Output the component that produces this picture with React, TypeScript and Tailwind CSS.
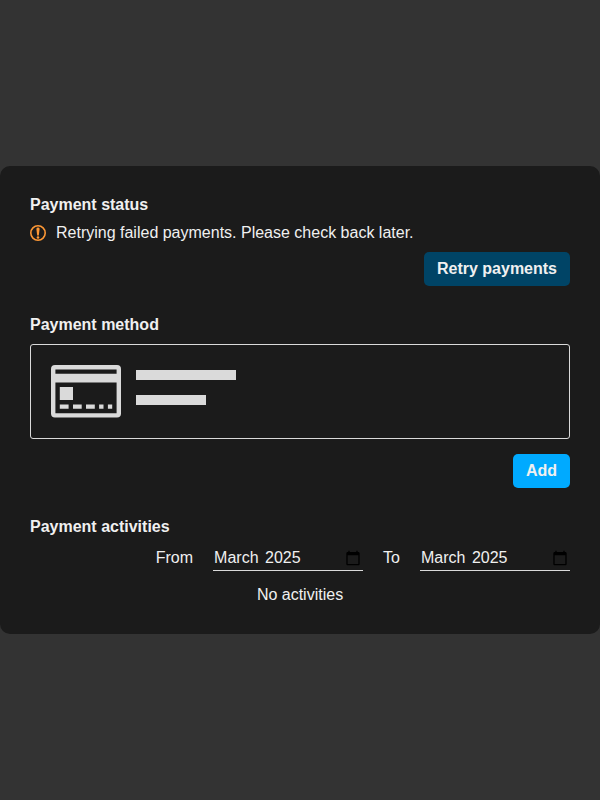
function CalendarIcon() {
  return (
    <svg viewBox="0 0 24 24" className="ml-auto size-4 shrink-0" fill="#000000">
      <path d="M20 3h-1V1h-2v2H7V1H5v2H4c-1.1 0-2 .9-2 2v16c0 1.1.9 2 2 2h16c1.1 0 2-.9 2-2V5c0-1.1-.9-2-2-2zm0 18H4V8h16v13z" />
    </svg>
  );
}

function MonthField({ label, month, year }: { label: string; month: string; year: string }) {
  return (
    <div className="flex items-start gap-5">
      <span className="pt-[3px]">{label}</span>
      <button
        type="button"
        className="flex h-[25px] w-[150px] items-center border-b border-[#dadada] pr-0.5 text-left"
      >
        <span className="whitespace-pre">
          <span className="px-px">{month}</span> <span className="px-px">{year}</span>
        </span>
        <CalendarIcon />
      </button>
    </div>
  );
}

function WarningIcon() {
  return (
    <svg viewBox="0 0 16 16" className="size-4 shrink-0" fill="none">
      <circle cx="8" cy="8" r="7.2" stroke="#fc9735" strokeWidth="1.6" />
      <path d="M6.4 3.9a1.6 1.4 0 0 1 3.2 0l-.7 5.9a.9.9 0 0 1-1.8 0z" fill="#fc9735" />
      <circle cx="8" cy="12.5" r="1.3" fill="#fc9735" />
    </svg>
  );
}

function CardIcon() {
  return (
    <svg viewBox="0 0 70 53" className="h-[53px] w-[70px] shrink-0" fill="#dadada">
      <path
        fillRule="evenodd"
        d="M4 0h62a4 4 0 0 1 4 4v44.500a4 4 0 0 1-4 4H4a4 4 0 0 1-4-4V4a4 4 0 0 1 4-4zM4.400 4.500v4.200h61.200V4.500zM4.400 17.500v30.700h61.200V17.500z"
      />
      <path d="M8.800 22h13.200v13H8.800zM8.800 39.500h8.800v4.300H8.800zM22 39.500h8.700v4.300H22zM35 39.500h8.800v4.300H35zM48.100 39.500h4.400v4.300h-4.400zM56.900 39.500h4.300v4.300h-4.300z" />
    </svg>
  );
}

export default function App() {
  return (
    <div className="flex h-screen items-center bg-[#333333] font-['Liberation_Sans',Arial,sans-serif] text-base leading-[18px] text-[#f0f0f0]">
      <main className="flex w-full flex-col gap-[30px] rounded-[10px] bg-[#1b1b1b] p-[30px]">
        <section className="flex flex-col gap-2.5">
          <h2 className="font-bold">Payment status</h2>
          <div className="flex items-center gap-2.5">
            <WarningIcon />
            <p>Retrying failed payments. Please check back later.</p>
          </div>
          <button className="self-end rounded-[5px] bg-[#004466] px-[13px] py-2 font-bold">
            Retry payments
          </button>
        </section>

        <section className="flex flex-col">
          <h2 className="font-bold">Payment method</h2>
          <div className="mt-2.5 flex h-[95px] items-start gap-[15px] rounded-[3px] border border-[#dadada] p-5">
            <CardIcon />
            <div className="flex flex-col gap-[15px] pt-[5px]">
              <div className="h-2.5 w-[100px] bg-[#dadada]" />
              <div className="h-2.5 w-[70px] bg-[#dadada]" />
            </div>
          </div>
          <button className="mt-[15px] self-end rounded-[5px] bg-[#00aaff] px-[13px] py-2 font-bold">
            Add
          </button>
        </section>

        <section className="flex flex-col">
          <h2 className="font-bold">Payment activities</h2>
          <div className="mt-2.5 flex justify-end gap-5">
            <MonthField label="From" month="March" year="2025" />
            <MonthField label="To" month="March" year="2025" />
          </div>
          <p className="mt-[15px] text-center">No activities</p>
        </section>
      </main>
    </div>
  );
}
